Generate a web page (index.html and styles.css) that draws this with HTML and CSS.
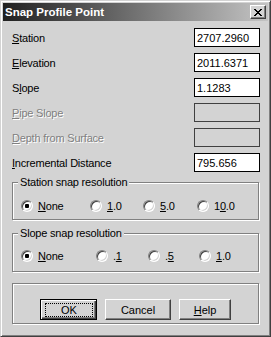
FILE: index.html
```html
<!DOCTYPE html>
<html lang="en">
<head>
    <meta charset="UTF-8">
    <title>Snap Profile Point</title>
    <link rel="stylesheet" href="styles.css">
</head>
<body>
    <div class="window">
        <div class="titlebar">
            <span class="title">Snap Profile Point</span>
            <span class="close">
                <svg width="8" height="7" viewBox="0 0 8 7" shape-rendering="crispEdges">
                    <path d="M0 0h2v1H0zM6 0h2v1H6zM1 1h2v1H1zM5 1h2v1H5zM2 2h4v1H2zM3 3h2v1H3zM2 4h4v1H2zM1 5h2v1H1zM5 5h2v1H5zM0 6h2v1H0zM6 6h2v1H6z" fill="#000"/>
                </svg>
            </span>
        </div>

        <div class="content">
            <div class="row">
                <span class="label"><u>S</u>tation</span>
                <input class="field" type="text" value="2707.2960" readonly>
            </div>
            <div class="row">
                <span class="label"><u>E</u>levation</span>
                <input class="field" type="text" value="2011.6371" readonly>
            </div>
            <div class="row">
                <span class="label">S<u>l</u>ope</span>
                <input class="field" type="text" value="1.1283" readonly>
            </div>
            <div class="row disabled">
                <span class="label"><u>P</u>ipe Slope</span>
                <input class="field" type="text" disabled>
            </div>
            <div class="row disabled">
                <span class="label"><u>D</u>epth from Surface</span>
                <input class="field" type="text" disabled>
            </div>
            <div class="row">
                <span class="label"><u>I</u>ncremental Distance</span>
                <input class="field" type="text" value="795.656" readonly>
            </div>

            <div class="group group-station">
                <div class="group-title">Station snap resolution</div>
                <div class="radios">
                    <div class="option"><span class="radio checked"></span><span><u>N</u>one</span></div>
                    <div class="option"><span class="radio"></span><span><u>1</u>.0</span></div>
                    <div class="option"><span class="radio"></span><span><u>5</u>.0</span></div>
                    <div class="option"><span class="radio"></span><span>1<u>0</u>.0</span></div>
                </div>
            </div>

            <div class="group group-slope">
                <div class="group-title">Slope snap resolution</div>
                <div class="radios">
                    <div class="option"><span class="radio checked"></span><span><u>N</u>one</span></div>
                    <div class="option"><span class="radio"></span><span>.<u>1</u></span></div>
                    <div class="option"><span class="radio"></span><span>.<u>5</u></span></div>
                    <div class="option"><span class="radio"></span><span><u>1</u>.0</span></div>
                </div>
            </div>

            <div class="group group-buttons">
                <div class="buttons">
                    <button class="btn btn-ok"><span class="focus">OK</span></button>
                    <button class="btn btn-cancel">Cancel</button>
                    <button class="btn btn-help"><u>H</u>elp</button>
                </div>
            </div>
        </div>
    </div>
</body>
</html>
```

FILE: styles.css
```css
body {
    margin: 0;
}

.window {
    width: 271px;
    height: 337px;
    box-sizing: border-box;
    padding: 2px;
    background: #d3d3d3;
    border: 1px solid;
    border-color: #d3d3d3 #404040 #404040 #d3d3d3;
    box-shadow: inset 1px 1px #fff, inset -1px -1px #808080;
    font: 11px "Liberation Sans", Arial, sans-serif;
    letter-spacing: -0.2px;
    color: #000;
}

.titlebar {
    height: 18px;
    padding: 0 2px;
    display: flex;
    align-items: center;
    justify-content: space-between;
    background: linear-gradient(to right, #202020, #c4c4c4);
}

.title {
    color: #fff;
    font-size: 11.5px;
    font-weight: bold;
    letter-spacing: 0;
}

.close {
    width: 16px;
    height: 14px;
    box-sizing: border-box;
    display: flex;
    align-items: center;
    justify-content: center;
    background: #d3d3d3;
    border: 1px solid;
    border-color: #fff #404040 #404040 #fff;
    box-shadow: inset -1px -1px #808080;
}

.content {
    padding: 4px 8px 0 9px;
}

.row {
    height: 25px;
    display: flex;
    align-items: center;
    justify-content: space-between;
}

.field {
    width: 66px;
    height: 19px;
    box-sizing: border-box;
    margin: 0;
    padding: 0 2px;
    border: 1px solid #000;
    background: #fff;
    font: inherit;
    letter-spacing: 0;
    color: #000;
    outline: none;
}

.disabled .label {
    color: #808080;
    text-shadow: 1px 1px 0 #fff;
}

.disabled .field {
    background: #d3d3d3;
    border-color: #404040;
}

/* etched group boxes */
.group {
    margin-right: 1px;
    border: 1px solid #808080;
    box-shadow: inset 1px 1px #fff, 1px 1px #fff;
}

.group-title {
    width: fit-content;
    margin: -7px 0 0 5px;
    padding: 0 2px;
    line-height: 13px;
    background: #d3d3d3;
}

.group-station {
    margin-top: 7px;
}

.group-slope {
    margin-top: 13px;
}

.radios {
    height: 26px;
    margin-top: 4px;
    padding-left: 8px;
    display: grid;
    align-items: center;
    grid-template-columns: 69px 53px 54px auto;
}

.group-slope .radios {
    margin-top: 3px;
    margin-bottom: 2px;
    grid-template-columns: 75px 52px 51px auto;
}

.option {
    display: flex;
    align-items: center;
}

.radio {
    width: 12px;
    height: 12px;
    box-sizing: border-box;
    margin-right: 5px;
    border-radius: 50%;
    background: #fff;
    border: 1px solid;
    border-color: #808080 #fff #fff #808080;
    box-shadow: inset 1px 1px #404040, inset -1px -1px #d3d3d3;
}

.radio.checked {
    background: radial-gradient(circle, #000 0 2px, #fff 2.5px);
}

.group-buttons {
    margin-top: 11px;
}

.buttons {
    display: flex;
    gap: 8px;
    padding: 15px 0 3px 27px;
}

.btn {
    height: 21px;
    box-sizing: border-box;
    margin: 0;
    padding: 0;
    background: #d3d3d3;
    border: 1px solid;
    border-color: #fff #404040 #404040 #fff;
    box-shadow: inset -1px -1px #808080;
    font: inherit;
    color: #000;
}

.btn-ok {
    width: 57px;
    display: flex;
    padding: 3px 3px 2px 4px;
    border-color: #000;
    box-shadow: inset 1px 1px #fff, inset -1px -1px #404040, inset -2px -2px #808080;
}

.focus {
    flex: 1;
    display: flex;
    align-items: center;
    justify-content: center;
    border: 1px dotted #000;
}

.btn-cancel {
    width: 66px;
}

.btn-help {
    width: 52px;
}
```
